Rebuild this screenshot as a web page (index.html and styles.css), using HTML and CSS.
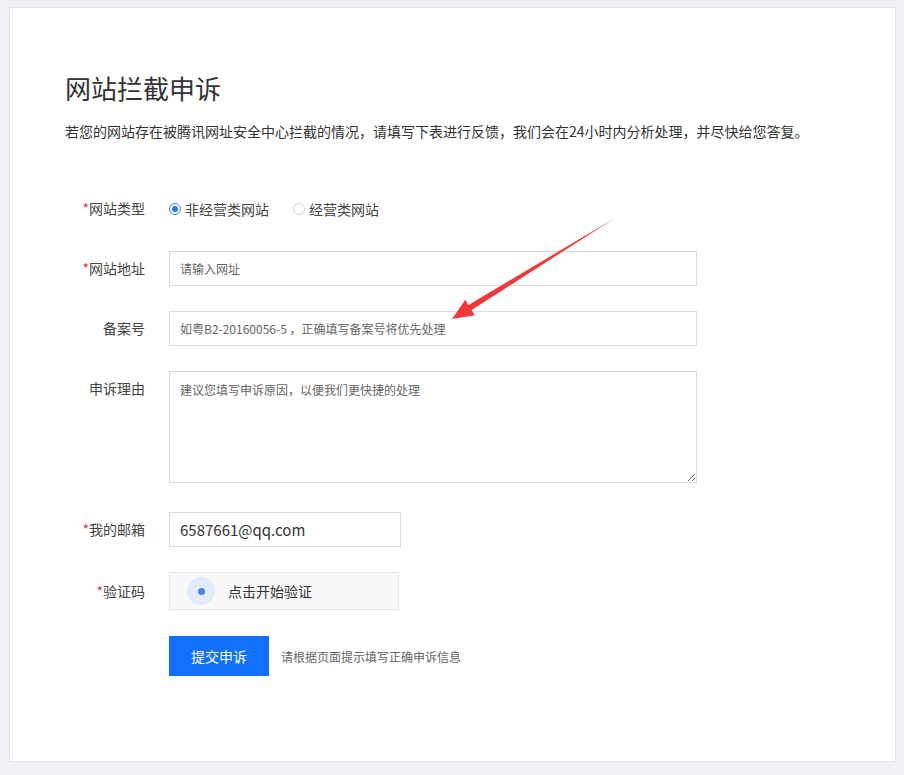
FILE: index.html
```html
<!DOCTYPE html>
<html lang="zh-CN">
<head>
  <meta charset="UTF-8" />
  <meta name="viewport" content="width=device-width, initial-scale=1.0" />
  <title>网站拦截申诉</title>
  <link rel="stylesheet" href="styles.css">
</head>
<body>
  <div class="card">
    <h1>网站拦截申诉</h1>
    <p class="desc">若您的网站存在被腾讯网址安全中心拦截的情况，请填写下表进行反馈，我们会在24小时内分析处理，并尽快给您答复。</p>

    <form class="appeal-form" onsubmit="return false">
      <div class="form-row row-type">
        <label class="form-label"><span class="req">*</span>网站类型</label>
        <div class="radio-group">
          <label class="radio checked"><span class="radio-dot"></span>非经营类网站</label>
          <label class="radio"><span class="radio-dot"></span>经营类网站</label>
        </div>
      </div>

      <div class="form-row">
        <label class="form-label" for="url"><span class="req">*</span>网站地址</label>
        <input class="text-input" type="text" id="url" placeholder="请输入网址">
      </div>

      <div class="form-row">
        <label class="form-label" for="icp">备案号</label>
        <input class="text-input" type="text" id="icp" placeholder="如粤B2-20160056-5 ，正确填写备案号将优先处理">
      </div>

      <div class="form-row row-top">
        <label class="form-label" for="reason">申诉理由</label>
        <textarea class="text-area" id="reason" placeholder="建议您填写申诉原因，以便我们更快捷的处理"></textarea>
      </div>

      <div class="form-row">
        <label class="form-label" for="email"><span class="req">*</span>我的邮箱</label>
        <input class="text-input email" type="text" id="email" value="6587661@qq.com">
      </div>

      <div class="form-row row-captcha">
        <label class="form-label"><span class="req">*</span>验证码</label>
        <div class="captcha">
          <span class="captcha-icon"><span></span></span>
          点击开始验证
        </div>
      </div>

      <div class="form-row">
        <span class="form-label"></span>
        <button type="submit" class="btn-submit">提交申诉</button>
        <span class="hint">请根据页面提示填写正确申诉信息</span>
      </div>
    </form>
  </div>

  <svg class="arrow" width="904" height="775" viewBox="0 0 904 775">
    <polygon points="615,218 468.4,304.9 465.3,299.8 452,319 474.7,315.2 471.6,310.1" fill="#f1393c" />
  </svg>
</body>
</html>
```

FILE: styles.css
```css
body {
  margin: 0;
  background-color: #f0f0f4;
  font-family: "Noto Sans CJK SC", "Liberation Sans", sans-serif;
  color: #333;
  position: relative;
  height: 775px;
  overflow: hidden;
}

.card {
  margin: 7px 0 0 9px;
  width: 885px;
  height: 753px;
  background-color: #fff;
  border: 1px solid #e2e2e8;
  box-sizing: content-box;
  padding: 0;
}

h1 {
  margin: 62px 0 0 55px;
  font-size: 26px;
  font-weight: normal;
  line-height: 36px;
  color: #333;
}

.desc {
  margin: 15px 0 0 55px;
  font-size: 14px;
  line-height: 20px;
  color: #333;
}

.appeal-form {
  margin: 50px 0 0 55px;
}

.form-row {
  display: flex;
  align-items: center;
  margin-bottom: 25px;
}

.row-type {
  height: 35px;
  margin-bottom: 25px;
}

.row-top {
  align-items: flex-start;
  margin-bottom: 29px;
}

.row-captcha {
  margin-bottom: 26px;
}

.form-label {
  width: 80px;
  flex-shrink: 0;
  margin-right: 24px;
  text-align: right;
  font-size: 14px;
  line-height: 35px;
  color: #444;
}

.req {
  color: #e0344a;
}

.radio-group {
  display: flex;
  align-items: center;
  gap: 24px;
}

.radio {
  display: flex;
  align-items: center;
  font-size: 14px;
  color: #444;
}

.radio-dot {
  width: 10px;
  height: 10px;
  border: 1px solid #d3d3d3;
  border-radius: 50%;
  margin-right: 4px;
  position: relative;
}

.radio.checked .radio-dot {
  border-color: #3f7ef0;
}

.radio.checked .radio-dot::after {
  content: "";
  position: absolute;
  left: 2px;
  top: 2px;
  width: 6px;
  height: 6px;
  border-radius: 50%;
  background-color: #2f73ee;
}

.text-input {
  width: 528px;
  height: 35px;
  box-sizing: border-box;
  border: 1px solid #dadada;
  padding: 0 10px;
  font-family: inherit;
  font-size: 12px;
  color: #333;
  outline: none;
}

.text-input::placeholder,
.text-area::placeholder {
  color: #666;
}

.text-input.email {
  width: 232px;
  font-size: 15px;
}

.text-area {
  width: 528px;
  height: 112px;
  box-sizing: border-box;
  border: 1px solid #dadada;
  padding: 9px 10px;
  font-family: inherit;
  font-size: 12px;
  line-height: 18px;
  resize: both;
  outline: none;
}

.captcha {
  width: 230px;
  height: 38px;
  box-sizing: border-box;
  border: 1px solid #e6e6e6;
  background-color: #f8f8f8;
  display: flex;
  align-items: center;
  padding-left: 17px;
  font-size: 14px;
  color: #333;
}

.captcha-icon {
  width: 28px;
  height: 28px;
  border-radius: 50%;
  background-color: #e2ebf9;
  display: flex;
  justify-content: center;
  align-items: center;
  margin-right: 13px;
}

.captcha-icon span {
  width: 7px;
  height: 7px;
  border-radius: 50%;
  background-color: #4a84e8;
}

.btn-submit {
  width: 100px;
  height: 40px;
  border: none;
  background-color: #1171fd;
  color: #fff;
  font-family: inherit;
  font-size: 14px;
  cursor: pointer;
}

.hint {
  margin-left: 12px;
  font-size: 12px;
  color: #666;
}

.arrow {
  position: absolute;
  top: 0;
  left: 0;
  pointer-events: none;
}
```
